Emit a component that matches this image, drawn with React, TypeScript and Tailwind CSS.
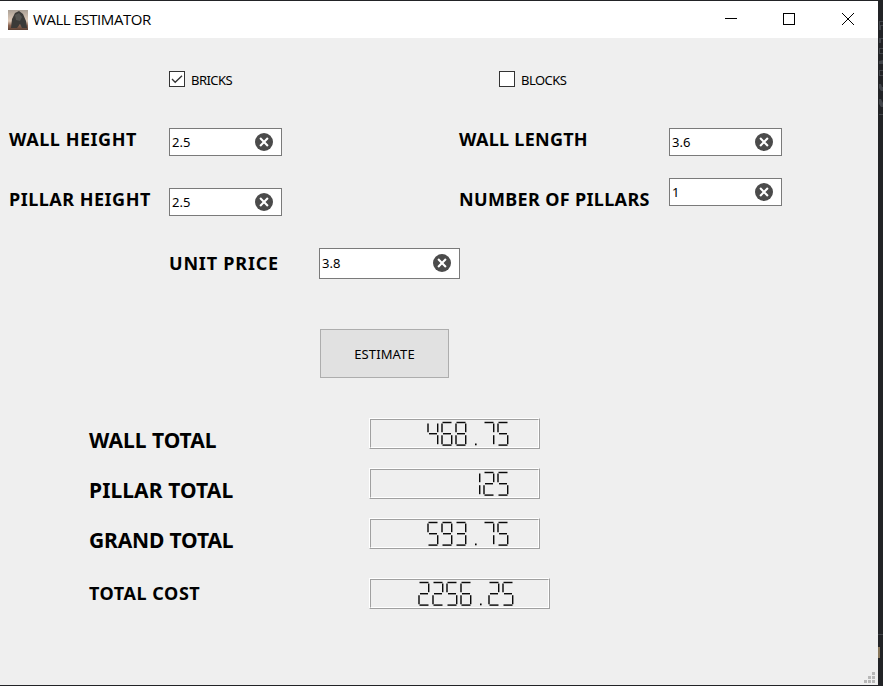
import React from "react";

const SEGMENTS: Record<string, string> = {
  "1": "bc",
  "2": "abged",
  "3": "abgcd",
  "4": "fgbc",
  "5": "afgcd",
  "6": "afgedc",
  "7": "abc",
  "8": "abcdefg",
  "9": "abcdfg",
};

const PATHS: Record<string, string> = {
  a: "M1.5 .8H10.5",
  b: "M10.7 1.8V10.5",
  c: "M10.7 13.5V22.5",
  d: "M1.5 23.4H10.5",
  e: "M1 13.5V22.5",
  f: "M1 1.8V10.5",
  g: "M2 12H10",
};

function Lcd({ value, start, className }: { value: string; start: number; className: string }) {
  return (
    <div className={`h-[31px] border border-t-white border-r-[#a0a0a0] border-b-[#a0a0a0] border-l-white ${className}`}>
      <div className="h-full border border-t-[#a0a0a0] border-r-white border-b-white border-l-[#a0a0a0]">
        <svg className="block h-full w-full" role="img" aria-label={value}>
          {value.split("").map((ch, i) => {
            const x = start + i * 14;
            if (ch === ".") {
              return <rect key={i} x={x + 6} y={23.5} width={1.6} height={1.8} fill="#000" />;
            }
            return (
              <g key={i} transform={`translate(${x} 1.7)`} fill="none">
                {SEGMENTS[ch].split("").map((s) => (
                  <path key={s} d={PATHS[s]} stroke="#0a0a0a" strokeWidth="1.45" />
                ))}
              </g>
            );
          })}
        </svg>
      </div>
    </div>
  );
}

function Clear() {
  return (
    <svg className="size-[18px] shrink-0" viewBox="0 0 18 18" fill="none">
      <circle cx="9" cy="9" r="9" fill="#4b4b4b" />
      <path d="M5.1 5.1l7.8 7.8M12.9 5.1l-7.8 7.8" stroke="#fff" strokeWidth="2.1" />
    </svg>
  );
}

function Field({ value, className }: { value: string; className: string }) {
  return (
    <div className={`flex shrink-0 items-center justify-between border border-[#7a7a7a] bg-white pr-[8px] pl-[2px] text-[13px] leading-none ${className}`}>
      <span className="pt-px">{value}</span>
      <Clear />
    </div>
  );
}

function Check({ label, checked = false }: { label: string; checked?: boolean }) {
  return (
    <div className="flex h-4 items-center gap-[6px]">
      <span className="flex size-4 items-center justify-center border border-[#333] bg-white">
        {checked && (
          <svg className="size-[14px]" viewBox="0 0 14 14" fill="none">
            <path d="M2 7l3.2 3.3L12 3.7" stroke="#333" strokeWidth="1.3" />
          </svg>
        )}
      </span>
      <span className="pt-[2px] text-[13px] leading-none tracking-[-0.55px]">{label}</span>
    </div>
  );
}

function Label({ children, className }: { children: string; className: string }) {
  return <div className={`shrink-0 font-bold whitespace-nowrap ${className}`}>{children}</div>;
}

export default function App() {
  return (
    <div className="flex h-[686px] w-[883px] overflow-hidden bg-[#222326] pt-px font-['Noto_Sans',sans-serif] text-black">
      <div className="flex h-[684px] w-[878px] shrink-0 flex-col bg-[#efefef]">
        <header className="flex h-[37px] shrink-0 items-center bg-white pl-2">
          <svg className="size-5" viewBox="0 0 20 20">
            <defs>
              <linearGradient id="sky" x1="0" y1="0" x2="0" y2="1">
                <stop offset="0" stopColor="#aaa096" />
                <stop offset="0.55" stopColor="#e0cbb9" />
                <stop offset="0.78" stopColor="#8a6350" />
                <stop offset="1" stopColor="#5b4034" />
              </linearGradient>
            </defs>
            <rect width="20" height="20" fill="url(#sky)" />
            <path d="M3 18L4 9L7 3L11 1L15 4L18 11L19 18H14L12 14L9 18Z" fill="#3b3a38" />
            <path d="M7 5L11 3L14 7L12 11L8 10Z" fill="#555451" />
          </svg>
          <span className="-mt-[2px] ml-[5px] font-['Open_Sans',sans-serif] text-[15px] leading-5 tracking-[-0.45px]">WALL ESTIMATOR</span>
          <svg className="mt-[-2px] mr-6 ml-auto h-3 w-[129px]" viewBox="0 0 129 12" fill="none" stroke="#000">
            <path d="M0 5.5H12M58.5 .5h11v11h-11z" shapeRendering="crispEdges" />
            <path d="M117 0l12 12M129 0l-12 12" />
          </svg>
        </header>

        <main className="flex min-h-0 grow flex-col">
          <div className="mt-[33px] flex h-4">
            <div className="ml-[169px] w-[330px]"><Check label="BRICKS" checked /></div>
            <Check label="BLOCKS" />
          </div>

          <div className="mt-[41px] flex h-7">
            <Label className="-mt-px ml-[9px] w-[160px] text-[18px] leading-6 tracking-[0.54px]">WALL HEIGHT</Label>
            <Field className="h-7 w-[113px]" value="2.5" />
            <Label className="-mt-px ml-[177px] w-[210px] text-[18px] leading-6 tracking-[0.27px]">WALL LENGTH</Label>
            <Field className="h-7 w-[113px]" value="3.6" />
          </div>

          <div className="mt-[22px] flex h-[38px]">
            <Label className="mt-[9px] mr-[18px] ml-[9px] w-[142px] text-[18px] leading-6 tracking-[0.5px]">PILLAR HEIGHT</Label>
            <Field className="mt-[10px] h-7 w-[113px]" value="2.5" />
            <Label className="mt-[9px] ml-[177px] w-[210px] text-[18px] leading-6 tracking-[0.34px]">NUMBER OF PILLARS</Label>
            <Field className="h-7 w-[113px]" value="1" />
          </div>

          <div className="mt-8 flex h-[31px]">
            <Label className="mt-[3px] ml-[169px] w-[150px] text-[18px] leading-6 tracking-[0.8px]">UNIT PRICE</Label>
            <Field className="h-[31px] w-[141px] pt-px pb-[2px]" value="3.8" />
          </div>

          <button className="mt-[50px] ml-[320px] h-[49px] w-[129px] shrink-0 border border-[#adadad] bg-[#e1e1e1] pt-[2px] text-[13px] tracking-[0.1px]">ESTIMATE</button>

          <div className="mt-10 flex h-[50px]">
            <Label className="mt-[7px] ml-[89px] w-[280px] text-[21px] leading-[30px]">WALL TOTAL</Label>
            <Lcd className="w-[171px]" value="468.75" start={56} />
          </div>
          <div className="flex h-[50px]">
            <Label className="mt-[7px] ml-[89px] w-[280px] text-[21px] leading-[30px] tracking-[0.1px]">PILLAR TOTAL</Label>
            <Lcd className="w-[171px]" value="125" start={98} />
          </div>
          <div className="flex h-[60px]">
            <Label className="mt-[7px] ml-[89px] w-[280px] text-[21px] leading-[30px] tracking-[-0.15px]">GRAND TOTAL</Label>
            <Lcd className="w-[171px]" value="593.75" start={56} />
          </div>
          <div className="flex h-[50px]">
            <Label className="mt-[3px] ml-[89px] w-[280px] text-[18px] leading-6 tracking-[0.55px]">TOTAL COST</Label>
            <Lcd className="w-[181px]" value="2256.25" start={47} />
          </div>
          <svg className="mt-auto mr-[3px] mb-[2px] ml-auto size-[11px]" fill="#b8b8b8" shapeRendering="crispEdges">
            <path d="M8 0h3v3h-3zM4 4h3v3h-3zM8 4h3v3h-3zM0 8h3v3h-3zM4 8h3v3h-3zM8 8h3v3h-3z" />
          </svg>
        </main>
      </div>
      <svg className="h-[685px] w-[5px] shrink-0" fill="#4a4e54" opacity="0.8">
        <path d="M1 20h4v1H2v3h3v1H1zM1 24h2v5H1zM1 37h4v1H3v4H1zM1 47h4v1H2v4h3v1H1zM1 60l4-1v4H1zM1 69h4v1H2v4h3v1H1zM1 83h2l1 3h1v4H3l-2-3zM1 98h2l2 4v4H3l-2-3zM1 113h4v1H1zM0 633h5v1H0z" />
        <path d="M0 646h2v11H0z" fill="#a08a68" />
      </svg>
    </div>
  );
}
